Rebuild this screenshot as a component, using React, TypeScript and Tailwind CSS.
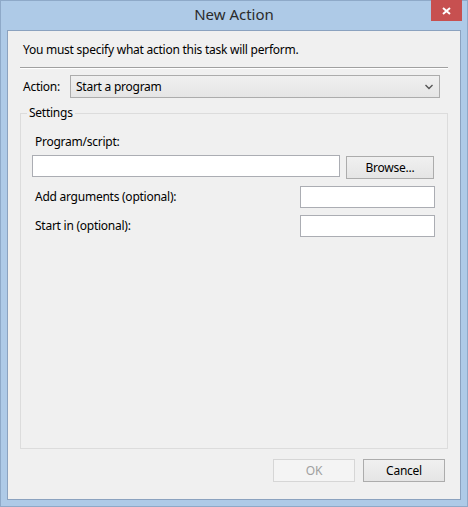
import React from "react";

const font = { fontFamily: '"Noto Sans", "Open Sans", sans-serif', letterSpacing: "-0.25px" };

function TextBox({ className = "" }: { className?: string }) {
  return <div className={`h-[22px] border border-[#abadb3] bg-white ${className}`} />;
}

function Button({ label, disabled = false, className = "" }: { label: string; disabled?: boolean; className?: string }) {
  return (
    <div
      className={`flex h-[23px] w-[82px] items-center justify-center border text-[12px] ${
        disabled
          ? "border-[#d6d6d6] bg-[#f4f4f4] text-[#a0a0a0]"
          : "border-[#acacac] bg-gradient-to-b from-[#f0f0f0] to-[#e5e5e5] text-[#000]"
      } ${className}`}
    >
      {label}
    </div>
  );
}

export default function App() {
  return (
    <div
      className="flex h-[507px] w-[468px] flex-col border border-[#8ea9c8] bg-[#aecae7] text-[#000]"
      style={font}
    >
      {/* title bar */}
      <div className="relative flex h-[29px] shrink-0 items-center justify-center">
        <span className="mt-[-2px] text-[15px] tracking-normal text-[#2b2b2b]">New Action</span>
        <div className="absolute right-[5px] top-[-1px] flex h-[21px] w-[31px] items-center justify-center bg-[#c75050]">
          <svg width="9" height="8" viewBox="0 0 9 8">
            <path d="M1 1 L8 7 M8 1 L1 7" stroke="#fff" strokeWidth="2" />
          </svg>
        </div>
      </div>

      {/* client area */}
      <div className="mx-[6px] mb-[6px] flex flex-1 flex-col border border-[#8ba2bf] bg-[#f0f0f0] text-[12px]">
        <div className="ml-[15px] mt-[10px] leading-[18px]">You must specify what action this task will perform.</div>

        <div className="mx-[12px] mt-[8px] h-[2px] border-t border-[#a0a0a0] bg-white" />

        <div className="ml-[15px] mr-[20px] mt-[6px] flex items-center">
          <span className="w-[47px]">Action:</span>
          <div className="flex h-[23px] flex-1 items-center justify-between border border-[#acacac] bg-gradient-to-b from-[#f0f0f0] to-[#e5e5e5] pl-[5px] pr-[6px]">
            <span>Start a program</span>
            <svg width="8" height="6" viewBox="0 0 8 6">
              <path d="M0.5 1 L4 4.5 L7.5 1" stroke="#555" strokeWidth="1.4" fill="none" />
            </svg>
          </div>
        </div>

        {/* settings group */}
        <div className="relative mx-[12px] mt-[15px] flex flex-1 flex-col border border-[#dcdcdc] pb-[8px]">
          <span className="absolute left-[6px] top-[-10px] bg-[#f0f0f0] px-[2px] leading-[18px]">Settings</span>
          <div className="ml-[14px] mt-[19px] leading-[18px]">Program/script:</div>
          <div className="ml-[11px] mt-[4px] flex items-start">
            <TextBox className="w-[308px]" />
            <Button label="Browse..." className="ml-[6px] mt-[1px] w-[88px]" />
          </div>
          <div className="ml-[14px] mr-[12px] mt-[7px] flex items-center justify-between">
            <span>Add arguments (optional):</span>
            <TextBox className="w-[135px]" />
          </div>
          <div className="ml-[14px] mr-[12px] mt-[7px] flex items-center justify-between">
            <span>Start in (optional):</span>
            <TextBox className="w-[135px]" />
          </div>
        </div>

        <div className="mb-[17px] mr-[15px] mt-[10px] flex justify-end gap-[8px]">
          <Button label="OK" disabled />
          <Button label="Cancel" />
        </div>
      </div>
    </div>
  );
}
